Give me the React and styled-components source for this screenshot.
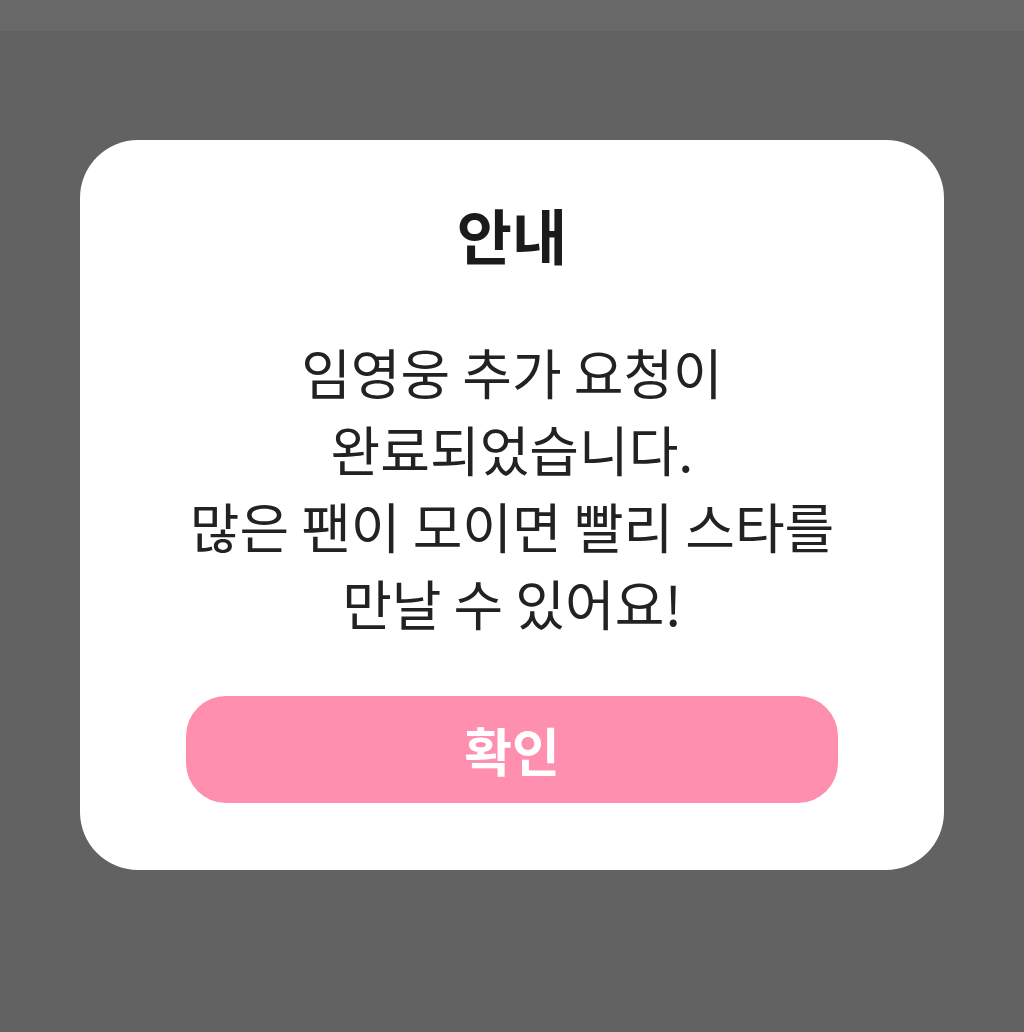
import React from 'react';
import styled, { createGlobalStyle } from 'styled-components';

const GlobalStyle = createGlobalStyle`
  * {
    margin: 0;
    padding: 0;
    box-sizing: border-box;
  }
  body {
    background: #626262;
    font-family: "Noto Sans CJK KR", "Noto Sans", sans-serif;
  }
`;

const Screen = styled.div`
  width: 1024px;
  height: 1032px;
  display: flex;
  flex-direction: column;
  background: #626262;
`;

const StatusBar = styled.div`
  height: 31px;
  background: #686868;
`;

const Overlay = styled.div`
  flex: 1;
  display: flex;
  justify-content: center;
  padding-top: 109px;
`;

const Dialog = styled.div`
  width: 864px;
  height: 730px;
  background: #ffffff;
  border-radius: 58px;
  display: flex;
  flex-direction: column;
  align-items: center;
  padding: 48px 106px 67px;
`;

const Title = styled.h2`
  font-size: 60px;
  font-weight: 700;
  color: #1b1b1b;
  line-height: 92px;
`;

const Message = styled.p`
  margin-top: 53px;
  font-size: 54px;
  font-weight: 400;
  color: #222222;
  line-height: 77px;
  text-align: center;
  white-space: nowrap;
`;

const ConfirmButton = styled.button`
  margin-top: auto;
  width: 100%;
  height: 107px;
  border: none;
  border-radius: 40px;
  background: #ff8fae;
  color: #ffffff;
  font-family: inherit;
  font-size: 52px;
  font-weight: 700;
  cursor: pointer;
`;

export default function App() {
  return (
    <Screen>
      <GlobalStyle />
      <StatusBar />
      <Overlay>
        <Dialog>
          <Title>안내</Title>
          <Message>
            임영웅 추가 요청이
            <br />
            완료되었습니다.
            <br />
            많은 팬이 모이면 빨리 스타를
            <br />
            만날 수 있어요!
          </Message>
          <ConfirmButton>확인</ConfirmButton>
        </Dialog>
      </Overlay>
    </Screen>
  );
}
